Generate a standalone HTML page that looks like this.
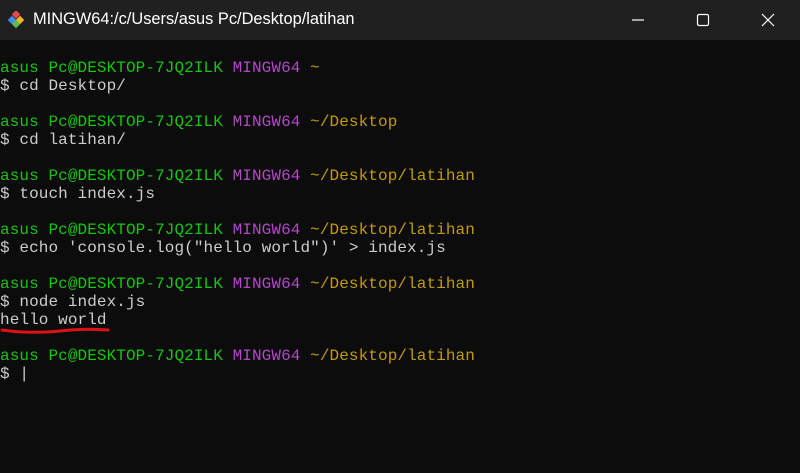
<!DOCTYPE html>
<html><head><style>
body{margin:0;width:800px;height:473px;background:#0c0c0c;overflow:hidden;position:relative;font-family:"Liberation Sans",sans-serif}
.tb{position:absolute;left:0;top:0;width:800px;height:40px;background:#202020;color:#fff}
.title{position:absolute;left:33px;top:10px;font-size:16.4px;color:#fff}
.term{position:absolute;left:0;top:59px;font-family:"Liberation Mono",monospace;font-size:16px;letter-spacing:0.09px;line-height:18px;color:#cccccc;white-space:pre}
.g{color:#16c60c}.p{color:#b148c6}.y{color:#c19c00}
</style></head><body>
<div class="tb">
<svg style="position:absolute;left:8px;top:11px" width="18" height="18" viewBox="0 0 18 18">
<rect x="5" y="0.5" width="6" height="6" fill="#e84a4a" transform="rotate(45 8 3.5)"/>
<rect x="1" y="6" width="6" height="6" fill="#3f8ef0" transform="rotate(45 4 9)"/>
<rect x="9" y="6" width="6" height="6" fill="#f0b429" transform="rotate(45 12 9)"/>
<rect x="5" y="10" width="6" height="6" fill="#5fbf4a" transform="rotate(45 8 13)"/>
</svg>
<div class="title">MINGW64:/c/Users/asus Pc/Desktop/latihan</div>
<svg style="position:absolute;left:630px;top:12px" width="160" height="16">
<line x1="2" y1="8" x2="14" y2="8" stroke="#fff" stroke-width="1.2"/>
<rect x="67.5" y="2.5" width="11" height="11" rx="1.5" fill="none" stroke="#fff" stroke-width="1.2"/>
<path d="M132 2 L144 14 M144 2 L132 14" stroke="#fff" stroke-width="1.2"/>
</svg>
</div>
<div class="term"><span class="g">asus Pc@DESKTOP-7JQ2ILK</span> <span class="p">MINGW64</span> <span class="y">~</span>
$ cd Desktop/

<span class="g">asus Pc@DESKTOP-7JQ2ILK</span> <span class="p">MINGW64</span> <span class="y">~/Desktop</span>
$ cd latihan/

<span class="g">asus Pc@DESKTOP-7JQ2ILK</span> <span class="p">MINGW64</span> <span class="y">~/Desktop/latihan</span>
$ touch index.js

<span class="g">asus Pc@DESKTOP-7JQ2ILK</span> <span class="p">MINGW64</span> <span class="y">~/Desktop/latihan</span>
$ echo 'console.log("hello world")' &gt; index.js

<span class="g">asus Pc@DESKTOP-7JQ2ILK</span> <span class="p">MINGW64</span> <span class="y">~/Desktop/latihan</span>
$ node index.js
hello world

<span class="g">asus Pc@DESKTOP-7JQ2ILK</span> <span class="p">MINGW64</span> <span class="y">~/Desktop/latihan</span>
$ |</div>
<svg style="position:absolute;left:0;top:325px" width="120" height="12">
<path d="M2 5 Q30 9 60 6 Q85 3 108 5" stroke="#e0101a" stroke-width="3" fill="none" stroke-linecap="round"/>
</svg>
</body></html>
